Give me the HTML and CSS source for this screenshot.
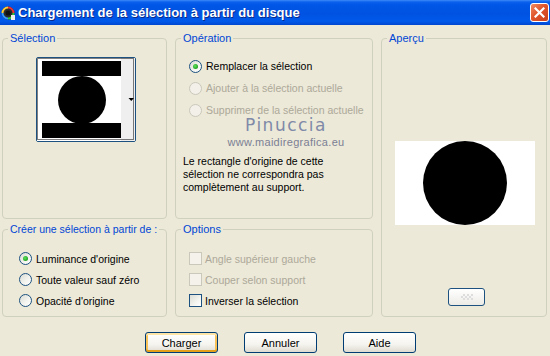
FILE: index.html
```html
<!DOCTYPE html>
<html lang="fr">

<head>
    <meta charset="UTF-8">
    <title>Chargement de la sélection à partir du disque</title>
    <link rel="stylesheet" href="styles.css">
</head>

<body>
    <div class="window">
        <div class="titlebar">
            <svg class="app-icon" width="14" height="14" viewBox="0 0 14 14">
                <circle cx="7" cy="7" r="6.5" fill="#2b2b2b"/>
                <path d="M7 1.5 A5.5 5.5 0 0 1 12.5 7" stroke="#e33" stroke-width="2" fill="none"/>
                <path d="M12.5 7 A5.5 5.5 0 0 1 7 12.5" stroke="#3c3" stroke-width="2" fill="none"/>
                <path d="M7 12.5 A5.5 5.5 0 0 1 1.5 7" stroke="#39f" stroke-width="2" fill="none"/>
                <path d="M1.5 7 A5.5 5.5 0 0 1 7 1.5" stroke="#fc3" stroke-width="2" fill="none"/>
                <circle cx="7" cy="7" r="2.5" fill="#111"/>
                <rect x="10" y="9" width="4" height="5" fill="#eee"/>
            </svg>
            <span class="title">Chargement de la sélection à partir du disque</span>
            <div class="close">
                <svg width="11" height="11" viewBox="0 0 11 11">
                    <path d="M1.5 1.5 L9.5 9.5 M9.5 1.5 L1.5 9.5" stroke="#fff" stroke-width="2.2" stroke-linecap="square"/>
                </svg>
            </div>
        </div>

        <div class="dialog">
            <div class="groups">
                <fieldset class="group sel">
                    <legend>Sélection</legend>
                    <div class="picker">
                        <svg width="98" height="83" viewBox="0 0 98 83">
                            <rect x="0" y="0" width="98" height="83" fill="#fff"/>
                            <rect x="84" y="0" width="14" height="83" fill="#efefef"/>
                            <rect x="5" y="3" width="79" height="15" fill="#000"/>
                            <circle cx="45" cy="42" r="24" fill="#000"/>
                            <rect x="5" y="65" width="79" height="15" fill="#000"/>
                            <polygon points="91.5,40 97,40 94.25,43" fill="#000"/>
                            <rect x="0.5" y="0.5" width="96" height="81" fill="none" stroke="#000" stroke-dasharray="1 1"/>
                        </svg>
                    </div>
                </fieldset>

                <fieldset class="group op">
                    <legend>Opération</legend>
                    <div class="opt-list">
                        <label class="opt"><span class="radio checked"></span>Remplacer la sélection</label>
                        <label class="opt disabled"><span class="radio"></span>Ajouter à la sélection actuelle</label>
                        <label class="opt disabled"><span class="radio"></span>Supprimer de la sélection actuelle</label>
                    </div>
                    <div class="watermark">
                        <div class="wm-name">Pinuccia</div>
                        <div class="wm-url">www.maidiregrafica.eu</div>
                    </div>
                    <p class="note">Le rectangle d'origine de cette<br>sélection ne correspondra pas<br>complètement au support.</p>
                </fieldset>

                <fieldset class="group preview">
                    <legend>Aperçu</legend>
                    <div class="preview-img">
                        <svg width="140" height="84" viewBox="0 0 140 84">
                            <rect width="140" height="84" fill="#fff"/>
                            <circle cx="70" cy="42" r="42" fill="#000"/>
                        </svg>
                    </div>
                    <div class="mini-btn"><span class="checker"></span></div>
                </fieldset>

                <fieldset class="group create">
                    <legend>Créer une sélection à partir de :</legend>
                    <div class="opt-list small">
                        <label class="opt"><span class="radio checked"></span>Luminance d'origine</label>
                        <label class="opt"><span class="radio"></span>Toute valeur sauf zéro</label>
                        <label class="opt"><span class="radio"></span>Opacité d'origine</label>
                    </div>
                </fieldset>

                <fieldset class="group options">
                    <legend>Options</legend>
                    <div class="opt-list small">
                        <label class="opt disabled"><span class="check"></span>Angle supérieur gauche</label>
                        <label class="opt disabled"><span class="check"></span>Couper selon support</label>
                        <label class="opt"><span class="check"></span>Inverser la sélection</label>
                    </div>
                </fieldset>
            </div>

            <div class="buttons">
                <button class="btn default">Charger</button>
                <button class="btn">Annuler</button>
                <button class="btn">Aide</button>
            </div>
        </div>
    </div>
</body>

</html>
```

FILE: styles.css
```css
* {
    box-sizing: border-box;
}

body {
    margin: 0;
    background-color: #ECE9D8;
    font-family: 'Liberation Sans', Arial, sans-serif;
    font-size: 10.5px;
    color: #000;
}

.window {
    width: 550px;
    height: 356px;
    overflow: hidden;
}

/* title bar */
.titlebar {
    height: 25px;
    display: flex;
    align-items: center;
    padding-left: 1px;
    background: linear-gradient(#3d8af7 0, #0b61ec 2px, #0056e6 5px, #0053e2 55%, #0059ea 85%, #0047cf 100%);
}

.app-icon {
    margin-top: 1px;
}

.title {
    margin-left: 3px;
    color: #fff;
    font-weight: bold;
    font-size: 13px;
    text-shadow: 1px 1px 0 #0a2a8a;
    flex: 1;
}

.close {
    width: 19px;
    height: 19px;
    margin-right: 1px;
    border: 1px solid #fff;
    border-radius: 3px;
    background: linear-gradient(135deg, #f08a62 0%, #e0552c 45%, #c9401a 100%);
    display: flex;
    align-items: center;
    justify-content: center;
}

/* group layout */
.groups {
    display: grid;
    grid-template-columns: 165px 198px 166px;
    grid-template-rows: 188px 95px;
    column-gap: 8px;
    row-gap: 3px;
    padding: 6px 0 0 2px;
}

.group {
    margin: 0;
    padding: 0;
    min-width: 0;
    border: 1px solid #D0D0BF;
    border-radius: 4px;
}

.group legend {
    margin-left: 5px;
    padding: 0 2px;
    line-height: 14px;
    font-size: 11px;
    white-space: nowrap;
    color: #0046D5;
}

.create legend {
    font-size: 10.5px;
}

.preview {
    grid-column: 3;
    grid-row: 1 / 3;
}

.create {
    grid-column: 1;
    grid-row: 2;
}

.options {
    grid-column: 2;
    grid-row: 2;
}

/* selection thumbnail */
.picker {
    width: 100px;
    height: 85px;
    margin: 12px 0 0 33px;
    border: 1px solid #1C5180;
    border-radius: 2px;
}

.picker svg {
    display: block;
}

/* radio / checkbox rows */
.opt-list {
    margin-top: 10px;
}

.opt-list.small {
    margin-top: 12px;
}

.opt {
    display: flex;
    align-items: center;
    height: 22px;
    white-space: nowrap;
}

.opt-list.small .opt {
    height: 21px;
}

.op .opt {
    padding-left: 13px;
}

.create .opt {
    padding-left: 16px;
}

.options .opt {
    padding-left: 13px;
}

.opt.disabled {
    color: #ACA899;
}

.radio {
    width: 13px;
    height: 13px;
    margin-right: 4px;
    border: 1px solid #1C5180;
    border-radius: 50%;
    background: linear-gradient(135deg, #dcdcd6 0%, #f4f4f0 60%, #fff 100%);
    display: flex;
    align-items: center;
    justify-content: center;
}

.radio.checked::after {
    content: "";
    width: 5px;
    height: 5px;
    border-radius: 50%;
    background: radial-gradient(circle at 40% 40%, #5ee35e 0%, #21A121 70%);
}

.opt.disabled .radio {
    border-color: #CAC8BB;
    background: #F2F0E8;
}

.check {
    width: 13px;
    height: 13px;
    margin-right: 3px;
    border: 1px solid #1C5180;
    background: linear-gradient(135deg, #dcdcd6 0%, #f4f4f0 60%, #fff 100%);
}

.opt.disabled .check {
    border-color: #CAC8BB;
    background: #F4F2EA;
}

/* watermark */
.watermark {
    margin-top: -5px;
    padding-left: 24px;
    text-align: center;
    color: #8089a8;
}

.wm-name {
    font-family: 'DejaVu Sans', sans-serif;
    font-size: 17px;
    line-height: 18px;
    letter-spacing: 1.5px;
}

.wm-url {
    margin-top: 2px;
    font-size: 11px;
    line-height: 12px;
    letter-spacing: 0.3px;
    color: #7b8094;
}

.note {
    margin: 7px 0 0 7px;
    line-height: 13px;
}

/* preview */
.preview-img {
    margin: 96px 0 0 13px;
    width: 140px;
    height: 84px;
}

.preview-img svg {
    display: block;
}

.mini-btn {
    width: 37px;
    height: 18px;
    margin: 63px 0 0 66px;
    border: 1px solid #1C5180;
    border-radius: 3px;
    background: linear-gradient(#fff, #ecebe6);
    display: flex;
    align-items: center;
    justify-content: center;
}

.checker {
    width: 12px;
    height: 6px;
    background-image: linear-gradient(45deg, #ddd 25%, transparent 25%, transparent 75%, #ddd 75%),
        linear-gradient(45deg, #ddd 25%, transparent 25%, transparent 75%, #ddd 75%);
    background-size: 4px 4px;
    background-position: 0 0, 2px 2px;
}

/* bottom buttons */
.buttons {
    display: flex;
    gap: 26px;
    padding: 15px 0 0 145px;
}

.btn {
    width: 73px;
    height: 21px;
    padding: 0;
    border: 1px solid #003C74;
    border-radius: 3px;
    background: linear-gradient(#ffffff 0%, #f5f4ef 60%, #dedbd0 100%);
    font-family: 'Liberation Sans', Arial, sans-serif;
    font-size: 11px;
    color: #000;
}

.btn.default {
    box-shadow: inset 0 2px 0 #ffe4a8, inset 0 -2px 0 #e5a01a, inset 2px 0 0 #f8c25a, inset -2px 0 0 #f8c25a;
}
```
